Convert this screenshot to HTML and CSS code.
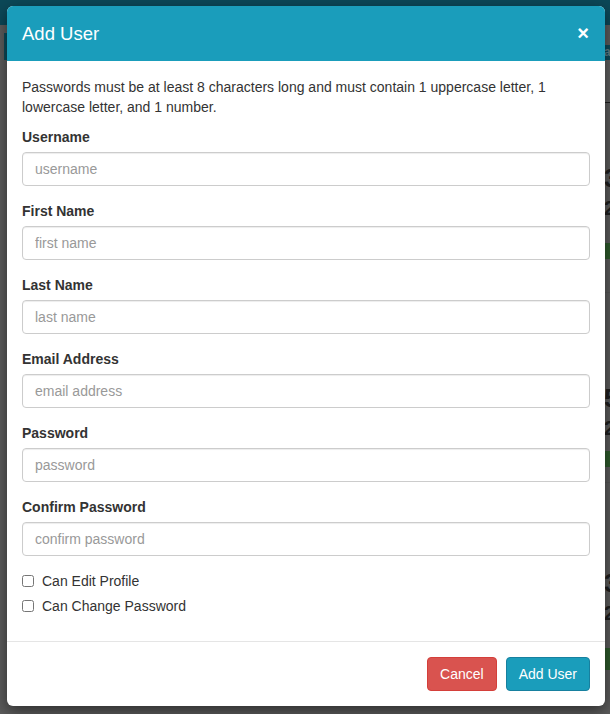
FILE: index.html
```html
<!DOCTYPE html>
<html>
<head>
<meta charset="utf-8">
<title>Add User</title>
<link rel="stylesheet" href="styles.css">
</head>
<body>
<div class="page">
  <div class="navbar"></div>
  <div class="content">
    <div class="side"></div>
    <div class="table">
      <div class="thead"><span class="th">a</span></div>
      <div class="tsub"></div>
      <div class="entry e1">
        <div class="nums"><div>3</div><div class="small">2</div></div>
        <div class="bar"></div>
      </div>
      <div class="entry e2">
        <div class="nums"><div>5</div><div class="small">2</div></div>
        <div class="bar"></div>
      </div>
      <div class="entry e3">
        <div class="nums"><div>3</div><div class="small">2</div></div>
        <div class="bar bar3"></div>
      </div>
    </div>
  </div>

  <div class="modal">
    <div class="modal-header">
      <h4 class="modal-title">Add User</h4>
      <button class="close" type="button">&times;</button>
    </div>
    <div class="modal-body">
      <p class="hint">Passwords must be at least 8 characters long and must contain 1 uppercase letter, 1 lowercase letter, and 1 number.</p>
      <div class="form-group">
        <label class="control-label">Username</label>
        <input class="form-control" type="text" placeholder="username">
      </div>
      <div class="form-group">
        <label class="control-label">First Name</label>
        <input class="form-control" type="text" placeholder="first name">
      </div>
      <div class="form-group">
        <label class="control-label">Last Name</label>
        <input class="form-control" type="text" placeholder="last name">
      </div>
      <div class="form-group">
        <label class="control-label">Email Address</label>
        <input class="form-control" type="text" placeholder="email address">
      </div>
      <div class="form-group">
        <label class="control-label">Password</label>
        <input class="form-control" type="password" placeholder="password">
      </div>
      <div class="form-group">
        <label class="control-label">Confirm Password</label>
        <input class="form-control" type="password" placeholder="confirm password">
      </div>
      <div class="checkbox">
        <label><input type="checkbox"><span>Can Edit Profile</span></label>
      </div>
      <div class="checkbox second">
        <label><input type="checkbox"><span>Can Change Password</span></label>
      </div>
    </div>
    <div class="modal-footer">
      <button class="btn btn-danger" type="button">Cancel</button>
      <button class="btn btn-primary" type="button">Add User</button>
    </div>
  </div>
</div>
</body>
</html>
```
FILE: styles.css
```css
* { box-sizing: border-box; }
html, body { margin: 0; padding: 0; }
body {
  font-family: "Liberation Sans", Arial, Helvetica, sans-serif;
  font-size: 14px;
  line-height: 20px;
  color: #333;
  background: #5c5c5c;
}
.page {
  position: relative;
  width: 610px;
  height: 714px;
  overflow: hidden;
  background: #5c5c5c;
}
.navbar { height: 25px; background: #0c4858; }
.content { display: flex; padding-top: 8px; }
.side { width: 3px; margin-left: 4px; height: 27px; background: #0d4a5a; }
.table { flex: 1; padding-top: 12px; }
.thead {
  height: 15px;
  background: #0d4a5a;
  display: flex;
  justify-content: flex-end;
}
.th { width: 6px; color: #5f7f88; font-size: 12px; line-height: 15px; font-weight: bold; }
.tsub { height: 43px; background: #5f5f5f; border-bottom: 1px solid #1e1e1e; }
.entry { display: flex; flex-direction: column; align-items: flex-end; border-bottom: 1px solid #555; }
.nums {
  width: 6px;
  overflow: hidden;
  color: #1f1f1f;
  font-weight: bold;
  font-size: 26px;
  line-height: 30px;
}
.nums .small { font-size: 20px; }
.bar { width: 5px; height: 16px; background: #2e5a2c; }
.e1 { padding-top: 60px; height: 190px; }
.e1 .bar { margin-top: 20px; }
.e2 { padding-top: 90px; height: 190px; }
.e2 .bar { margin-top: 8px; }
.e3 { padding-top: 85px; height: 240px; }
.e3 .bar3 { margin-top: 20px; height: 22px; }

/* modal */
.modal {
  position: absolute;
  top: 6px;
  left: 7px;
  width: 598px;
  background: #fff;
  border-radius: 6px;
  overflow: hidden;
  box-shadow: 0 5px 15px rgba(0, 0, 0, 0.5);
}
.modal-header {
  height: 55px;
  padding: 0 15px;
  background: #1a9dbb;
  display: flex;
  align-items: center;
  justify-content: space-between;
}
.modal-title {
  margin: 0;
  color: #fff;
  font-size: 18.5px;
  font-weight: normal;
  line-height: 25px;
}
.close {
  border: 0;
  background: none;
  padding: 0;
  margin: 0 1px 2px 0;
  color: #fff;
  font-family: "Liberation Sans", Arial, sans-serif;
  font-size: 20px;
  font-weight: bold;
  line-height: 1;
  cursor: pointer;
}
.modal-body { padding: 15px; }
.hint { margin: 1px 0 10px; }
.form-group { margin-bottom: 15px; }
.control-label {
  display: block;
  font-weight: bold;
  margin-bottom: 5px;
}
.form-control {
  display: block;
  width: 100%;
  height: 34px;
  padding: 6px 12px;
  font-family: "Liberation Sans", Arial, sans-serif;
  font-size: 14px;
  line-height: 20px;
  color: #555;
  background: #fff;
  border: 1px solid #ccc;
  border-radius: 4px;
  box-shadow: inset 0 1px 1px rgba(0, 0, 0, 0.075);
}
.form-control::placeholder { color: #999; }
.checkbox { margin: 0 0 10px; }
.checkbox.second { margin-top: -5px; }
.checkbox label {
  display: flex;
  align-items: center;
  min-height: 20px;
  cursor: pointer;
}
.checkbox input {
  width: 12px;
  height: 12px;
  margin: 0 8px 0 0;
  flex: none;
}
.modal-footer {
  border-top: 1px solid #e5e5e5;
  padding: 15px;
  display: flex;
  justify-content: flex-end;
  gap: 9px;
}
.btn {
  height: 34px;
  padding: 6px 12px;
  font-family: "Liberation Sans", Arial, sans-serif;
  font-size: 14px;
  line-height: 20px;
  border: 1px solid transparent;
  border-radius: 4px;
  color: #fff;
  cursor: pointer;
}
.btn-danger { background: #d9534f; border-color: #d43f3a; }
.btn-primary { background: #1a9dbb; border-color: #17809f; }
```
